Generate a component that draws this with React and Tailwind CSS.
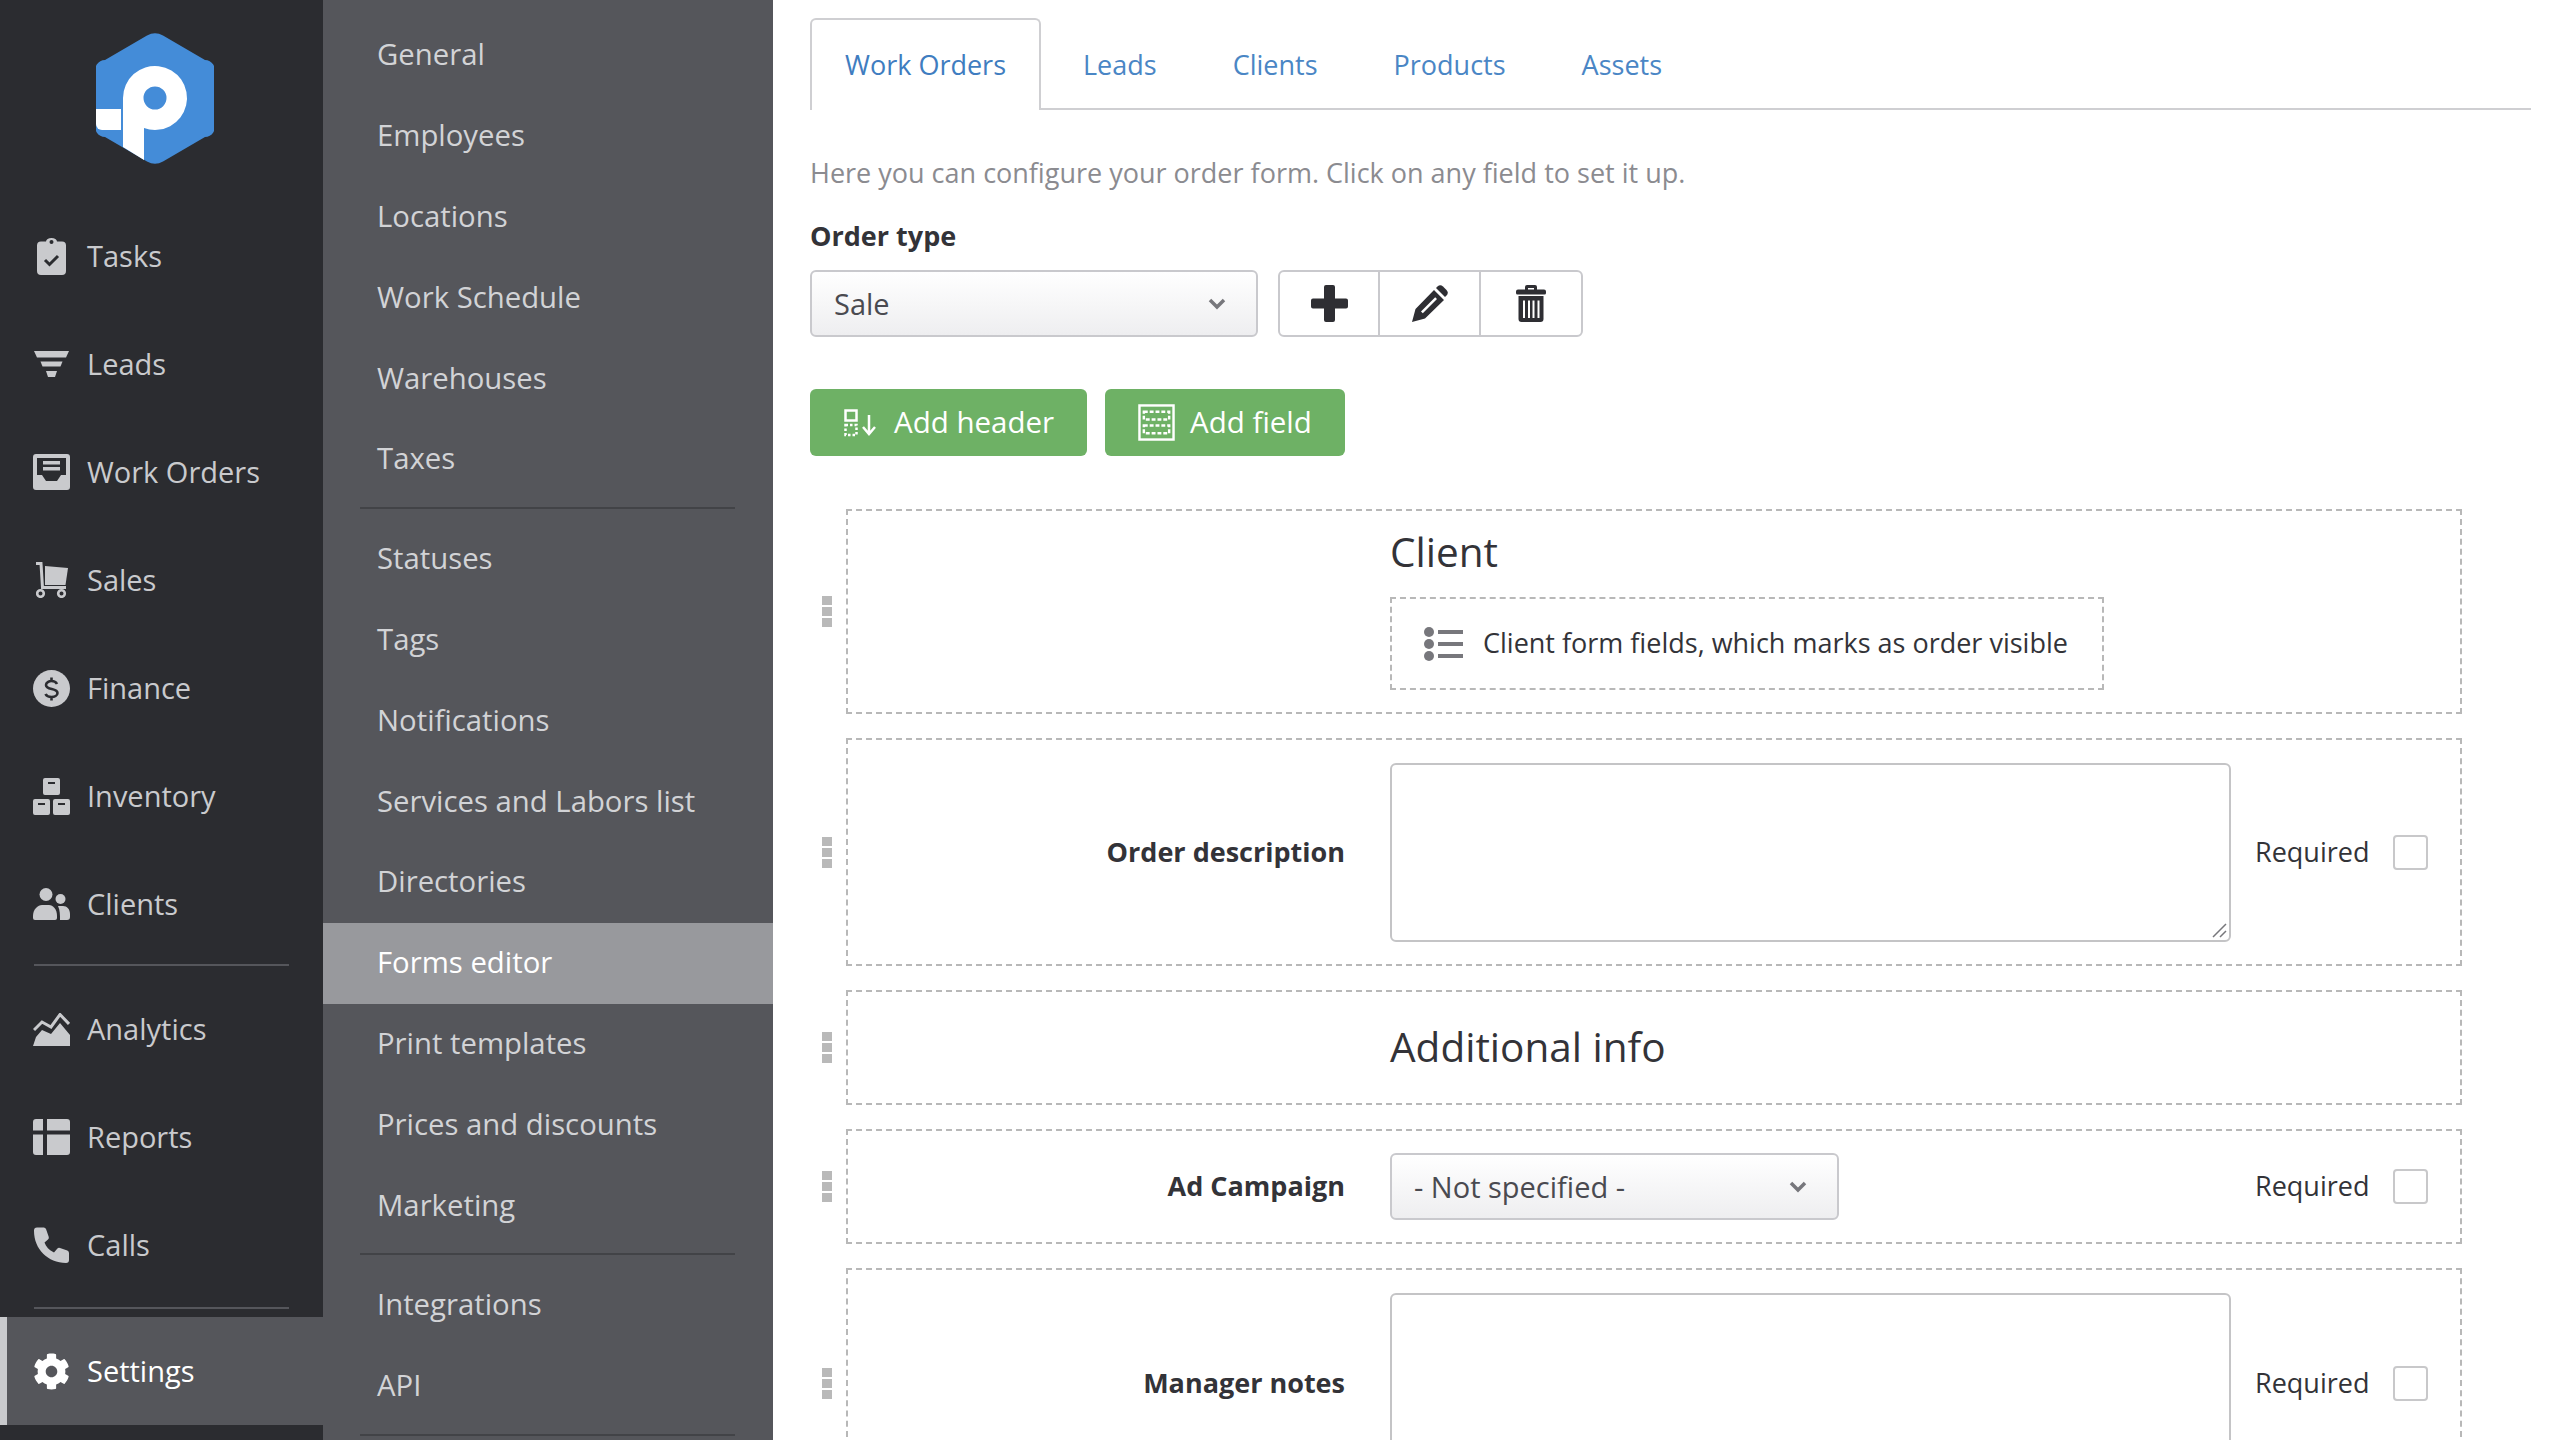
import { FaCog } from 'react-icons/fa';

const mainNav = [
  { label: 'Tasks', icon: TasksIcon },
  { label: 'Leads', icon: LeadsIcon },
  { label: 'Work Orders', icon: OrdersIcon },
  { label: 'Sales', icon: CartIcon },
  { label: 'Finance', icon: FinanceIcon },
  { label: 'Inventory', icon: InventoryIcon },
  { label: 'Clients', icon: ClientsIcon, divider: 'mt-[6px] mb-[9px]' },
  { label: 'Analytics', icon: AnalyticsIcon },
  { label: 'Reports', icon: ReportsIcon },
  { label: 'Calls', icon: CallsIcon, divider: 'mt-[8px] mb-[9px]' },
];

const subGroups = [
  ['General', 'Employees', 'Locations', 'Work Schedule', 'Warehouses', 'Taxes'],
  ['Statuses', 'Tags', 'Notifications', 'Services and Labors list', 'Directories', 'Forms editor', 'Print templates', 'Prices and discounts', 'Marketing'],
  ['Integrations', 'API'],
];

const tabs = ['Work Orders', 'Leads', 'Clients', 'Products', 'Assets'];

function TasksIcon() {
  return (
    <svg viewBox="0 0 29 37" className="w-[29px] h-[37px]" fill="currentColor">
      <path fillRule="evenodd" d="M9 3.500a5.500 3.500 0 0 1 11 0h5a4 4 0 0 1 4 4V33a4 4 0 0 1-4 4H4a4 4 0 0 1-4-4V7.500a4 4 0 0 1 4-4zM14.500 2a2 2 0 1 0 0 4 2 2 0 0 0 0-4z" />
      <path d="M8 22l4.500 4.500L21 18" fill="none" stroke="#2b2c30" strokeWidth="3" />
    </svg>
  );
}

function LeadsIcon() {
  return (
    <svg viewBox="0 0 35 26" className="w-[35px] h-[26px]" fill="currentColor">
      <path d="M0 0h35l-3 6.500H3z" />
      <path d="M6.500 10.500h22l-2 5h-18z" />
      <path d="M12 20h11l-2 6h-7z" />
    </svg>
  );
}

function OrdersIcon() {
  return (
    <svg viewBox="0 0 37 36" className="w-[37px] h-[36px]" fill="currentColor">
      <path fillRule="evenodd" d="M3 0h31a3 3 0 0 1 3 3v30a3 3 0 0 1-3 3H3a3 3 0 0 1-3-3V3a3 3 0 0 1 3-3zm1 4v17h5l4 6h11l4-6h5V4z" />
      <path d="M10 7h17v3.500H10zM10 13h17v3.500H10z" />
    </svg>
  );
}

function CartIcon() {
  return (
    <svg viewBox="0 0 32 36" className="w-[32px] h-[36px]" fill="currentColor">
      <path d="M0 1.500h5l1.500 24H30" fill="none" stroke="currentColor" strokeWidth="3" />
      <path d="M9 4l23 2-2.500 17H9z" />
      <circle cx="4.500" cy="31.500" r="3.300" fill="none" stroke="currentColor" strokeWidth="2.600" />
      <circle cx="25.500" cy="31.500" r="3.300" fill="none" stroke="currentColor" strokeWidth="2.600" />
    </svg>
  );
}

function FinanceIcon() {
  return (
    <svg viewBox="0 0 37 37" className="w-[37px] h-[37px]">
      <circle cx="18.500" cy="18.500" r="18.500" fill="currentColor" />
      <path d="M24 14c-1-2-3-3-5.500-3s-5.500 1.500-5.500 4c0 5.500 11.500 2.500 11.500 8 0 2.500-3 4-6 4s-5-1-6-3M18.500 7.500V11M18.500 27v3.500" fill="none" stroke="#2b2c30" strokeWidth="2.600" />
    </svg>
  );
}

function InventoryIcon() {
  return (
    <svg viewBox="0 0 37 37" className="w-[37px] h-[37px]" fill="currentColor">
      <path fillRule="evenodd" d="M12 0h13a2 2 0 0 1 2 2v13a2 2 0 0 1-2 2H12a2 2 0 0 1-2-2V2a2 2 0 0 1 2-2zm3 4v2h7V4z" />
      <path fillRule="evenodd" d="M2 21h13a2 2 0 0 1 2 2v12a2 2 0 0 1-2 2H2a2 2 0 0 1-2-2V23a2 2 0 0 1 2-2zm3 4v2h7v-2zM22 21h13a2 2 0 0 1 2 2v12a2 2 0 0 1-2 2H22a2 2 0 0 1-2-2V23a2 2 0 0 1 2-2zm3 4v2h7v-2z" />
    </svg>
  );
}

function ClientsIcon() {
  return (
    <svg viewBox="0 0 37 32" className="w-[37px] h-[32px]" fill="currentColor">
      <circle cx="13" cy="6.500" r="6.500" />
      <circle cx="27.500" cy="11" r="5" />
      <path d="M0 28c0-7 5-11 9-11h7c4 0 8 4 8 11v2a2 2 0 0 1-2 2H2a2 2 0 0 1-2-2z" />
      <path d="M25 18h5c4 0 7 3 7 8v3a3 3 0 0 1-3 3h-7c0-5 0-10-2-14z" />
    </svg>
  );
}

function AnalyticsIcon() {
  return (
    <svg viewBox="0 0 37 33" className="w-[37px] h-[33px]" fill="currentColor">
      <path d="M0 33l3-9 6-7 9 4 9-11 10 12v11z" />
      <path d="M1 17l8-8 9 5 9-12.500L36 11" fill="none" stroke="currentColor" strokeWidth="3" />
    </svg>
  );
}

function ReportsIcon() {
  return (
    <svg viewBox="0 0 37 36" className="w-[37px] h-[36px]" fill="currentColor">
      <path d="M3 0h7v11.500H0V3a3 3 0 0 1 3-3zM14 0h20a3 3 0 0 1 3 3v8.500H14zM0 15.500h10V36H3a3 3 0 0 1-3-3zM14 15.500h23V33a3 3 0 0 1-3 3H14z" />
    </svg>
  );
}

function CallsIcon() {
  return (
    <svg viewBox="0 0 37 37" className="w-[37px] h-[37px]" fill="currentColor">
      <path d="M1 4C1 22 15 36 33 36a3 3 0 0 0 3-3v-7a2.500 2.500 0 0 0-1.700-2.400L27 21a2.500 2.500 0 0 0-2.800.8L21 25.500c-5-2.500-8-5.500-9.500-10l3.500-3a2.500 2.500 0 0 0 .7-2.800L13 2A2.500 2.500 0 0 0 10.500.5H4a3 3 0 0 0-3 3z" />
    </svg>
  );
}

function Chevron({ className }) {
  return (
    <svg viewBox="0 0 18 12" className={className} fill="none" stroke="currentColor" strokeWidth="3.500">
      <path d="M2 2l7 7 7-7" />
    </svg>
  );
}

function NavItem({ item }) {
  const Icon = item.icon;
  return (
    <div className="h-[108px] flex items-center pl-[33px] gap-[17px]">
      <div className="w-[37px] flex justify-center shrink-0"><Icon /></div>
      <span className="whitespace-nowrap">{item.label}</span>
    </div>
  );
}

function Handle() {
  return (
    <div className="w-[10px] flex flex-col gap-[2px] shrink-0">
      <div className="h-[9px] bg-[#b9b9b9]" />
      <div className="h-[9px] bg-[#b9b9b9]" />
      <div className="h-[9px] bg-[#b9b9b9]" />
    </div>
  );
}

function Row({ height, children }) {
  return (
    <div className="flex items-center gap-[14px]">
      <Handle />
      <div className={`flex-1 border-2 border-dashed border-[#b8b8b8] ${height}`}>{children}</div>
    </div>
  );
}

function Required() {
  return (
    <div className="absolute left-[865px] top-0 bottom-0 flex items-center gap-[24px] text-[27px]">
      <span className="text-[#333338]">Required</span>
      <div className="w-[35px] h-[35px] rounded-[4px] border-2 border-[#c8c8ca] bg-white" />
    </div>
  );
}

function Field({ label, children }) {
  return (
    <div className="flex items-center h-full">
      <div className="w-[497px] shrink-0 text-right font-bold text-[27px] text-[#333338]">{label}</div>
      <div className="relative ml-[45px] flex-1 h-full flex items-center">
        {children}
        <Required />
      </div>
    </div>
  );
}

function SelectBox({ value, className }) {
  return (
    <div className={`${className} h-[67px] rounded-[6px] border-2 border-[#c9c9cd] bg-gradient-to-b from-white to-[#eeeef0] flex items-center justify-between pl-[22px] pr-[30px] text-[#4a4a50]`}>
      <span>{value}</span>
      <Chevron className="w-[18px] h-[12px] text-[#77777c]" />
    </div>
  );
}

export default function App() {
  return (
    <div className="w-[2560px] h-[1440px] overflow-hidden flex bg-white text-[29px] [font-family:'Open_Sans','Noto_Sans',sans-serif]">
      <aside className="w-[323px] shrink-0 h-full bg-[#2b2c30] text-[#c9cacd] flex flex-col">
        <div className="h-[202px] pt-[33px] pl-[96px] shrink-0">
          <svg viewBox="0 0 118 131" className="w-[118px] h-[131px]">
            <path d="M51 2.500a16 16 0 0 1 16 0L109 27a10 10 0 0 1 9 14v49a10 10 0 0 1-9 14l-42 24.500a16 16 0 0 1-16 0L9 104a10 10 0 0 1-9-14V41a10 10 0 0 1 9-14z" fill="#448cd8" />
            <path fillRule="evenodd" d="M27 65a32 32 0 1 1 21 30v32L27 114zM59 53.500a11.500 11.500 0 1 0 0 23 11.500 11.500 0 0 0 0-23z" fill="#fff" />
            <path d="M0 76h25v21H6a6 6 0 0 1-6-6z" fill="#fff" />
          </svg>
        </div>
        <div>
          {mainNav.map((item) => (
            <div key={item.label}>
              <NavItem item={item} />
              {item.divider && <div className={`mx-[34px] h-[2px] bg-[#55565b] ${item.divider}`} />}
            </div>
          ))}
        </div>
        <div className="h-[108px] bg-[#55565b] border-l-[7px] border-[#c9cacd] text-white flex items-center pl-[26px] gap-[17px] -mt-px">
          <div className="w-[37px] flex justify-center shrink-0"><FaCog className="w-[37px] h-[37px]" /></div>
          <span>Settings</span>
        </div>
      </aside>

      <nav className="w-[450px] shrink-0 h-full bg-[#55565b] text-[#d2d3d6] pt-[15px] text-[29.3px]">
        {subGroups.map((group, i) => (
          <div key={i}>
            {group.map((name) => (
              <div key={name} className={`h-[80.8px] flex items-center pl-[54px] ${name === 'Forms editor' ? 'bg-[#98999d] text-white' : ''}`}>{name}</div>
            ))}
            <div className="ml-[37px] mr-[38px] h-[2px] bg-[#424347] mt-[7px] mb-[10px]" />
          </div>
        ))}
      </nav>

      <main className="flex-1 min-w-0 pl-[37px] pr-[29px] pt-[18px]">
        <div className="flex h-[92px] border-b-2 border-[#cfcfd2] text-[27px]">
          {tabs.map((tab, i) => (
            <div
              key={tab}
              className={i === 0
                ? 'h-[92px] px-[33px] flex items-center border-2 border-b-0 border-[#cfcfd2] rounded-t-[6px] bg-white text-[#3f7dc0] mr-[7px]'
                : 'h-[92px] px-[33px] flex items-center border-2 border-b-0 border-transparent text-[#4a86c5] mr-[6px]'}
            >
              {tab}
            </div>
          ))}
        </div>

        <p className="mt-[43px] text-[27px] text-[#8b8b90] leading-[40px]">Here you can configure your order form. Click on any field to set it up.</p>
        <div className="mt-[23px] font-bold text-[27px] text-[#333338] leading-[40px]">Order type</div>

        <div className="mt-[14px] flex gap-[20px]">
          <SelectBox value="Sale" className="w-[448px]" />
          <div className="flex h-[67px] rounded-[6px] border-2 border-[#c9c9cd] text-[#2e2e33]">
            <div className="w-[100px] flex items-center justify-center border-r-2 border-[#c9c9cd]">
              <svg viewBox="0 0 37 37" className="w-[37px] h-[37px]" fill="currentColor">
                <path d="M15 0h7a2 2 0 0 1 2 2v11.500h11a2 2 0 0 1 2 2v6a2 2 0 0 1-2 2H24V35a2 2 0 0 1-2 2h-7a2 2 0 0 1-2-2V23.500H2a2 2 0 0 1-2-2v-6a2 2 0 0 1 2-2h11V2a2 2 0 0 1 2-2z" />
              </svg>
            </div>
            <div className="w-[101px] flex items-center justify-center border-r-2 border-[#c9c9cd]">
              <svg viewBox="0 0 36 37" className="w-[36px] h-[37px]" fill="currentColor">
                <path fillRule="evenodd" d="M0 37l3.500-13L22 5l10 10-19 18.500zM9 26.500l1.800 1.800L25 14l-1.800-1.800z" />
                <path d="M24 3l1.500-1.500a4 4 0 0 1 5.500 0l3.500 3.500a4 4 0 0 1 0 5.500L33 12z" />
              </svg>
            </div>
            <div className="w-[100px] flex items-center justify-center">
              <svg viewBox="0 0 30 37" className="w-[30px] h-[37px]" fill="currentColor">
                <path fillRule="evenodd" d="M9 4.500V2a2 2 0 0 1 2-2h8a2 2 0 0 1 2 2v2.500h7a2 2 0 0 1 2 2V8a1.500 1.500 0 0 1-1.500 1.500h-27A1.500 1.500 0 0 1 0 8V6.500a2 2 0 0 1 2-2zm3 0h6V3h-6z" />
                <path fillRule="evenodd" d="M2.500 11h25v23a3 3 0 0 1-3 3h-19a3 3 0 0 1-3-3zM7 15.500V33h2V15.500zm5 0V33h2V15.500zm4.500 0V33h2V15.500zm5 0V33h2V15.500z" />
              </svg>
            </div>
          </div>
        </div>

        <div className="mt-[52px] flex gap-[18px] text-[29.5px]">
          <div className="w-[277px] h-[67px] rounded-[6px] bg-[#6eb165] text-white flex items-center pl-[34px] gap-[17px]">
            <svg viewBox="0 0 33 28" className="w-[33px] h-[28px] shrink-0" fill="none" stroke="#fff" strokeWidth="2.500">
              <rect x="1.500" y="1.500" width="11" height="10" />
              <rect x="1.500" y="16" width="11" height="10" strokeDasharray="2.500 2" />
              <path d="M25 6v18M19 18l6 7 6-7" />
            </svg>
            <span>Add header</span>
          </div>
          <div className="w-[240px] h-[67px] rounded-[6px] bg-[#6eb165] text-white flex items-center pl-[33px] gap-[15px]">
            <svg viewBox="0 0 38 38" className="w-[37px] h-[37px] shrink-0" fill="none" stroke="#fff" strokeWidth="2.500">
              <rect x="1.500" y="1.500" width="35" height="35" />
              <rect x="6" y="8" width="26" height="8" strokeDasharray="4 2" />
              <rect x="6" y="22" width="26" height="8" strokeDasharray="4 2" />
            </svg>
            <span>Add field</span>
          </div>
        </div>

        <div className="mt-[53px] ml-[12px] mr-[69px] flex flex-col gap-[24px]">
          <Row height="h-[205px]">
            <div className="pl-[542px] pt-[13px]">
              <div className="text-[40.5px] leading-[56px] text-[#333338]">Client</div>
              <div className="mt-[17px] w-[714px] h-[93px] border-2 border-dashed border-[#b8b8b8] flex items-center pl-[32px] gap-[20px] text-[27px] text-[#333338]">
                <svg viewBox="0 0 39 34" className="w-[39px] h-[34px] shrink-0" fill="#77777c">
                  <circle cx="5" cy="5" r="5" />
                  <circle cx="5" cy="17" r="5" />
                  <circle cx="5" cy="29" r="5" />
                  <path d="M14 3h25v4H14zM14 15h25v4H14zM14 27h25v4H14z" />
                </svg>
                <span className="whitespace-nowrap">Client form fields, which marks as order visible</span>
              </div>
            </div>
          </Row>

          <Row height="h-[228px]">
            <Field label="Order description">
              <div className="relative w-[841px] h-[179px] rounded-[6px] border-2 border-[#c4c4c6] bg-white">
                <svg viewBox="0 0 16 16" className="absolute right-[2px] bottom-[2px] w-[16px] h-[16px]" stroke="#77777c" strokeWidth="1.500">
                  <path d="M2 15L15 2M9 15l6-6" />
                </svg>
              </div>
            </Field>
          </Row>

          <Row height="h-[115px]">
            <div className="pl-[542px] h-full flex items-center text-[40.5px] text-[#333338]">Additional info</div>
          </Row>

          <Row height="h-[115px]">
            <Field label="Ad Campaign">
              <SelectBox value="- Not specified -" className="w-[449px]" />
            </Field>
          </Row>

          <Row height="h-[230px]">
            <Field label="Manager notes">
              <div className="self-start mt-[23px] w-[841px] h-[179px] rounded-[6px] border-2 border-[#c4c4c6] bg-white" />
            </Field>
          </Row>
        </div>
      </main>
    </div>
  );
}
